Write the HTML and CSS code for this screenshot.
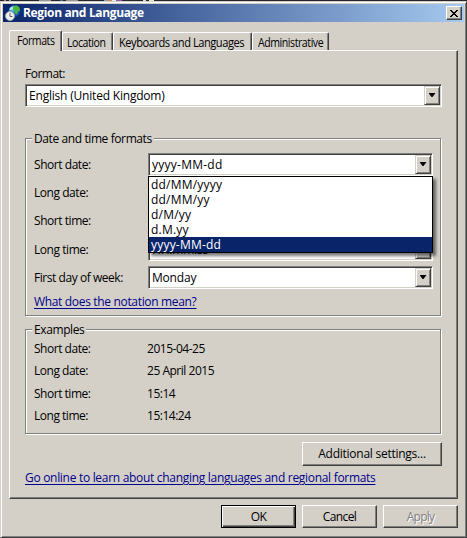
FILE: index.html
```html
<!DOCTYPE html>
<html lang="en">
<head>
<meta charset="utf-8">
<title>Region and Language</title>
<link rel="stylesheet" href="styles.css">
</head>
<body>
<div class="desktop"></div>
<main class="window">
  <header class="titlebar">
    <svg class="app-icon" width="16" height="16" viewBox="0 0 16 16">
      <defs><radialGradient id="sea" cx=".35" cy=".3"><stop offset="0" stop-color="#a9e4f8"/><stop offset=".5" stop-color="#3996dc"/><stop offset="1" stop-color="#1551b4"/></radialGradient></defs>
      <circle cx="9.5" cy="6" r="5.8" fill="url(#sea)"/>
      <path d="M9 1l3-.5 2.5 2 .5 3-2 1-1 3-2-1-.5-3-2-1z" fill="#49b83b"/>
      <path d="M4 5l2-3 2 .5-1 2z" fill="#b6ecf6"/>
      <circle cx="5" cy="11" r="4.5" fill="#eeeeea" stroke="#a6a8a8"/>
      <path d="M5 8v3.5h2.5" fill="none" stroke="#555c64"/>
    </svg>
    <h1 class="title">Region and Language</h1>
    <button class="close" aria-label="Close"><svg width="8" height="7" viewBox="0 0 8 7" shape-rendering="crispEdges"><path d="M0 0h2v1h1v1h2V1h1V0h2v1H7v1H6v1H5v1h1v1h1v1h1v1H6V6H5V5H3v1H2v1H0V6h1V5h1V4h1V3H2V2H1V1H0z"/></svg></button>
  </header>
  <nav class="tabs">
    <button class="tab selected"><span class="tab-text">Formats</span></button>
    <button class="tab location"><span class="tab-text">Location</span></button>
    <button class="tab keyboards"><span class="tab-text wide">Keyboards and Languages</span></button>
    <button class="tab admin"><span class="tab-text">Administrative</span></button>
  </nav>
  <section class="panel">
    <div class="format-label">Format:</div>
    <div class="combo"><span class="value">English (United Kingdom)</span><i class="arrow"></i></div>

    <section class="group formats">
      <h2 class="legend">Date and time formats</h2>
      <div class="row"><span class="label">Short date:</span>
        <div class="combo"><span class="value pattern">yyyy-MM-dd</span><i class="arrow"></i>
          <ul class="menu"><li>dd/MM/yyyy</li><li>dd/MM/yy</li><li>d/M/yy</li><li>d.M.yy</li><li class="active">yyyy-MM-dd</li></ul>
        </div></div>
      <div class="row"><span class="label">Long date:</span><div class="combo"><i class="arrow"></i></div></div>
      <div class="row tall"><span class="label">Short time:</span><div class="combo"><i class="arrow"></i></div></div>
      <div class="row"><span class="label">Long time:</span><div class="combo"><span class="value">HH:mm:ss</span><i class="arrow"></i></div></div>
      <div class="row day"><span class="label">First day of week:</span><div class="combo"><span class="value">Monday</span><i class="arrow"></i></div></div>
      <a class="link notation">What does the notation mean?</a>
    </section>

    <section class="group examples">
      <h2 class="legend">Examples</h2>
      <dl class="list">
        <dt>Short date:</dt><dd>2015-04-25</dd>
        <dt>Long date:</dt><dd>25 April 2015</dd>
        <dt>Short time:</dt><dd>15:14</dd>
        <dt>Long time:</dt><dd>15:14:24</dd>
      </dl>
    </section>
    <button class="button additional">Additional settings...</button>
    <a class="link online">Go online to learn about changing languages and regional formats</a>
  </section>
  <footer class="actions">
    <button class="button default">OK</button>
    <button class="button cancel">Cancel</button>
    <button class="button disabled">Apply</button>
  </footer>
</main>
</body>
</html>
```
FILE: styles.css
```css
* { box-sizing: border-box; }
body {
  margin: 0; width: 467px; height: 538px; overflow: hidden;
  background: #d4d0c8; color: #000;
  font: 12px/16px "Open Sans", "Noto Sans", sans-serif;
  letter-spacing: -0.15px; white-space: nowrap;
}
h1, h2, ul, dl, dd { margin: 0; padding: 0; font: inherit; list-style: none; }
button { font: inherit; letter-spacing: inherit; color: inherit; padding: 0; margin: 0; border: 0; border-radius: 0; background: #d4d0c8; }
.desktop {
  height: 1px;
  background: linear-gradient(90deg, #25242a 4px, #a88 4px 6px, #25242a 6px 9px, #8ab 9px 11px, #25242a 11px 39px, #999 39px 51px, #25242a 51px 60px, #468 60px 63px, #25242a 63px 66px, #999 66px 78px, #25242a 78px 104px, #7ac 104px 107px, #c85 107px 112px, #eee 112px 116px, #95a 116px 122px, #25242a 122px 143px, #ddd 143px 146px, #25242a 146px 149px, #eec 149px 154px, #25242a 154px);
}
.window {
  height: 537px; width: 467px; padding: 1px 1px 0 1px;
  border: 1px solid; border-color: #d4d0c8 #404040 #404040 #d4d0c8;
  box-shadow: inset 1px 1px #fff, inset -1px -1px #808080;
}
.titlebar {
  margin: 1px 1px 0; height: 18px; display: flex; align-items: center;
  background: linear-gradient(90deg, #0a246a, #a6caf0);
  padding: 0 2px; color: #fff;
}
.app-icon { flex: none; }
.title { margin-left: 2px; font-weight: 700; flex: 1; letter-spacing: -0.35px; }
.close {
  width: 16px; height: 14px; display: flex; justify-content: center; padding-top: 3px; color: #000;
  border: 1px solid; border-color: #fff #404040 #404040 #fff; box-shadow: inset -1px -1px #808080;
}
.tabs { display: flex; align-items: flex-end; height: 28px; padding-left: 7px; }
.tab {
  height: 18px; border: 1px solid; border-bottom: 0; border-color: #fff #404040 #fff #fff;
  border-radius: 2px 2px 0 0; box-shadow: inset -1px 0 #808080; line-height: 19px; text-align: left; padding-left: 4px;
}
.selected { width: 53px; height: 21px; margin-bottom: -1px; padding: 0 0 2px 7px; position: relative; }
.location { width: 51px; }
.keyboards { width: 139px; padding-left: 5px; }
.admin { width: 77px; padding-left: 5px; }
.tab-text { display: inline-block; letter-spacing: -0.5px; transform: scaleX(.88); transform-origin: left; }
.wide { transform: scaleX(.925); }
.panel {
  margin-left: 7px; width: 449px; height: 449px; padding: 13px 15px 0;
  display: flex; flex-direction: column;
  border: 1px solid; border-color: #fff #404040 #404040 #fff; box-shadow: inset -1px -1px #808080;
}
.format-label { height: 20px; line-height: 19px; letter-spacing: -0.5px; }
.combo {
  height: 23px; position: relative; flex: none; background: #fff; display: flex;
  border: 1px solid; border-color: #808080 #fff #fff #808080;
  box-shadow: inset 1px 1px #404040, inset -1px -1px #d4d0c8; padding: 1px;
}
.panel > .combo { width: 417px; }
.value { flex: 1; padding-left: 2px; line-height: 20px; letter-spacing: -0.2px; }
.pattern { letter-spacing: 0.25px; }
.arrow {
  width: 16px; height: 19px; margin-left: auto; background: #d4d0c8;
  border: 1px solid; border-color: #d4d0c8 #404040 #404040 #d4d0c8;
  box-shadow: inset 1px 1px #fff, inset -1px -1px #808080;
  display: flex; justify-content: center; padding-top: 6px;
}
.arrow::before { content: ""; width: 7px; height: 4px; background: #000; clip-path: polygon(0 0, 100% 0, 57% 100%, 43% 100%); }
.group {
  width: 416px; border: 1px solid #808080; flex: none;
  box-shadow: 1px 1px #fff, inset 1px 1px #fff; padding-left: 8px;
}
.legend { width: max-content; height: 16px; line-height: 18px; margin: -9px 0 0 -2px; padding: 0 2px; background: #d4d0c8; letter-spacing: -0.4px; }
.formats { margin-top: 31px; height: 178px; }
.row { display: grid; grid-template-columns: 114px 285px; height: 28px; line-height: 24px; }
.label { letter-spacing: -0.45px; }
.row:first-of-type { margin-top: 7px; }
.tall { height: 29px; }
.notation { display: block; width: max-content; letter-spacing: -0.33px; }
.menu {
  position: absolute; left: -1px; top: 22px; width: 285px; height: 77px; z-index: 1;
  border: 1px solid #000; background: #fff; line-height: 15px; box-shadow: 3px 3px 3px #0008;
}
.menu li { height: 15px; padding-left: 2px; letter-spacing: 0.2px; }
.menu .active { background: #0a246a; color: #fff; }
.link { color: #00008b; text-decoration: underline; text-underline-offset: 2px; text-decoration-thickness: 1px; }
.examples { margin-top: 13px; height: 105px; }
.list { display: grid; grid-template-columns: 113px 1fr; grid-auto-rows: 22.4px; padding-top: 4px; letter-spacing: -0.48px; }
.button {
  width: 75px; height: 23px; border: 1px solid; border-color: #fff #404040 #404040 #fff;
  box-shadow: inset -1px -1px #808080; line-height: 20px;
}
.additional { width: 140px; height: 24px; align-self: flex-end; margin: 8px 0 0; flex: none; letter-spacing: -0.25px; }
.online { margin-top: 4px; align-self: flex-start; letter-spacing: -0.3px; }
.actions { display: flex; gap: 6px; margin: 6px 0 0 219px; }
.default { border-color: #000; box-shadow: inset 1px 1px #fff, inset -1px -1px #404040, inset -2px -2px #808080; }
.cancel, .default { letter-spacing: -0.6px; }
.disabled { color: #808080; text-shadow: 1px 1px #fff; letter-spacing: -0.8px; }
```
